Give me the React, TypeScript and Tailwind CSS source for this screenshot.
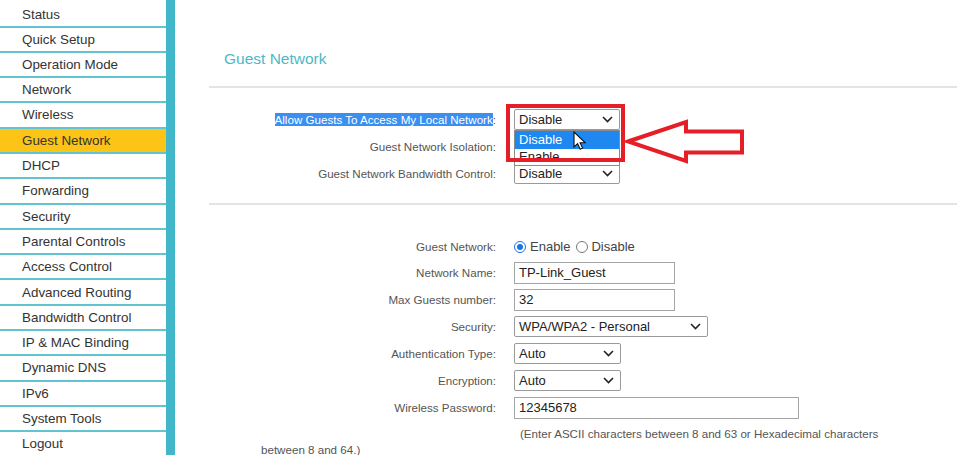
import { type ReactNode } from "react";

const menu = [
  "Status",
  "Quick Setup",
  "Operation Mode",
  "Network",
  "Wireless",
  "Guest Network",
  "DHCP",
  "Forwarding",
  "Security",
  "Parental Controls",
  "Access Control",
  "Advanced Routing",
  "Bandwidth Control",
  "IP & MAC Binding",
  "Dynamic DNS",
  "IPv6",
  "System Tools",
  "Logout",
];

const Chevron = () => (
  <svg width="11" height="7" viewBox="0 0 11 7" className="shrink-0">
    <path d="M1 1l4.5 4.5L10 1" fill="none" stroke="#222" strokeWidth="1.6" />
  </svg>
);

const Select = ({ value, w }: { value: string; w: string }) => (
  <div
    className={`flex h-[21px] ${w} items-center justify-between rounded-[2px] border border-[#9a9a9a] bg-white pl-[4px] pr-[6px] text-[13px] text-[#222]`}
  >
    <span>{value}</span>
    <Chevron />
  </div>
);

const Input = ({ value, w }: { value: string; w: string }) => (
  <div
    className={`flex h-[22px] ${w} items-center border border-[#a5a5a5] bg-white pl-[4px] text-[13px] text-[#222]`}
  >
    {value}
  </div>
);

const Row = ({ label, children, h = "h-[27px]" }: { label: ReactNode; children: ReactNode; h?: string }) => (
  <div className={`flex ${h} items-center`}>
    <div className="w-[287px] shrink-0 text-right text-[11.6px] text-[#555]">{label}</div>
    <div className="ml-[18px] flex items-center">{children}</div>
  </div>
);

const Radio = ({ on }: { on?: boolean }) =>
  on ? (
    <span className="flex h-[12px] w-[12px] items-center justify-center rounded-full border-[1.5px] border-[#1a73e8]">
      <span className="block h-[6px] w-[6px] rounded-full bg-[#1a73e8]" />
    </span>
  ) : (
    <span className="block h-[12px] w-[12px] rounded-full border border-[#777]" />
  );

export default function App() {
  return (
    <div className="flex h-[455px] w-[957px] overflow-hidden bg-white font-['Liberation_Sans',Arial,sans-serif]">
      {/* sidebar */}
      <nav className="flex w-[166px] shrink-0 flex-col">
        {menu.map((item, i) => (
          <div
            key={item}
            className={`flex shrink-0 items-center border-b-2 border-[#62c3d1] pl-[22px] text-[13.4px] text-[#333] ${
              i === 0 ? "h-[27.5px] pt-[4px]" : "h-[25.3px] pt-[1px]"
            } ${item === "Guest Network" ? "bg-[#fbc417]" : "bg-white"}`}
          >
            {item}
          </div>
        ))}
      </nav>
      <div className="w-[9px] shrink-0 bg-[#43b7ca]" />

      {/* main */}
      <main className="flex flex-1 flex-col">
        <div className="h-[3px] bg-[#45b8cb]" />
        <div className="h-[1px] bg-[#c9ecf1]" />
        <div className="pl-[34px]">
          <h1 className="mt-[50px] pl-[15px] text-[15.5px] leading-[18px] text-[#4fb7c7]">Guest Network</h1>
          <div className="mt-[18px] h-[2px] bg-[#e4e4e4]" />

          <div className="mt-[18px]">
            <Row
              label={
                <>
                  <span className="bg-[#3a8ff0] text-white">Allow Guests To Access My Local Network</span>:
                </>
              }
            >
              <div className="relative">
                <Select value="Disable" w="w-[106px]" />
                {/* open dropdown */}
                <div className="absolute left-0 top-[21px] z-10 w-[106px] border border-[#8a8a8a] bg-white text-[13px]">
                  <div className="flex h-[18px] items-center bg-[#1e87f0] pl-[4px] text-white">Disable</div>
                  <div className="flex h-[16px] items-center pl-[4px] text-[#222]">Enable</div>
                </div>
                {/* cursor */}
                <svg className="absolute left-[59px] top-[22px] z-20" width="13" height="19" viewBox="0 0 13 19">
                  <path d="M1 1v15l3.6-3.4 2.6 5.6 2.4-1.1-2.5-5.4h5z" fill="#fff" stroke="#111" strokeWidth="1.1" />
                </svg>
                {/* red highlight box */}
                <div className="absolute left-[-8px] top-[-5px] z-30 h-[58px] w-[119px] border-[4px] border-[#e51e27]" />
                {/* red arrow */}
                <svg className="absolute left-[111px] top-[10px] z-30" width="122" height="46" viewBox="0 0 122 46">
                  <path
                    d="M3 22.5L61 3v9.5h56v21H61V42z"
                    fill="#fff"
                    stroke="#e51e27"
                    strokeWidth="4"
                    strokeLinejoin="miter"
                  />
                </svg>
              </div>
            </Row>
            <Row label="Guest Network Isolation:">
              <Select value="Disable" w="w-[106px]" />
            </Row>
            <Row label="Guest Network Bandwidth Control:">
              <Select value="Disable" w="w-[106px]" />
            </Row>
          </div>

          <div className="mt-[16px] h-[2px] bg-[#e4e4e4]" />

          <div className="mt-[29px]">
            <Row label="Guest Network:" h="h-[25px]">
              <div className="flex items-center text-[13px] text-[#444]">
                <Radio on />
                <span className="ml-[4px]">Enable</span>
                <span className="ml-[6px]">
                  <Radio />
                </span>
                <span className="ml-[3px]">Disable</span>
              </div>
            </Row>
            <Row label="Network Name:">
              <Input value="TP-Link_Guest" w="w-[161px]" />
            </Row>
            <Row label="Max Guests number:">
              <Input value="32" w="w-[161px]" />
            </Row>
            <Row label="Security:">
              <Select value="WPA/WPA2 - Personal" w="w-[194px]" />
            </Row>
            <Row label="Authentication Type:">
              <Select value="Auto" w="w-[107px]" />
            </Row>
            <Row label="Encryption:">
              <Select value="Auto" w="w-[107px]" />
            </Row>
            <Row label="Wireless Password:">
              <Input value="12345678" w="w-[285px]" />
            </Row>
            <p className="ml-[52px] mt-[5px] w-[640px] indent-[259px] text-[11.6px] leading-[16px] text-[#555]">
              (Enter ASCII characters between 8 and 63 or Hexadecimal characters between 8 and 64.)
            </p>
          </div>
        </div>
      </main>
    </div>
  );
}
